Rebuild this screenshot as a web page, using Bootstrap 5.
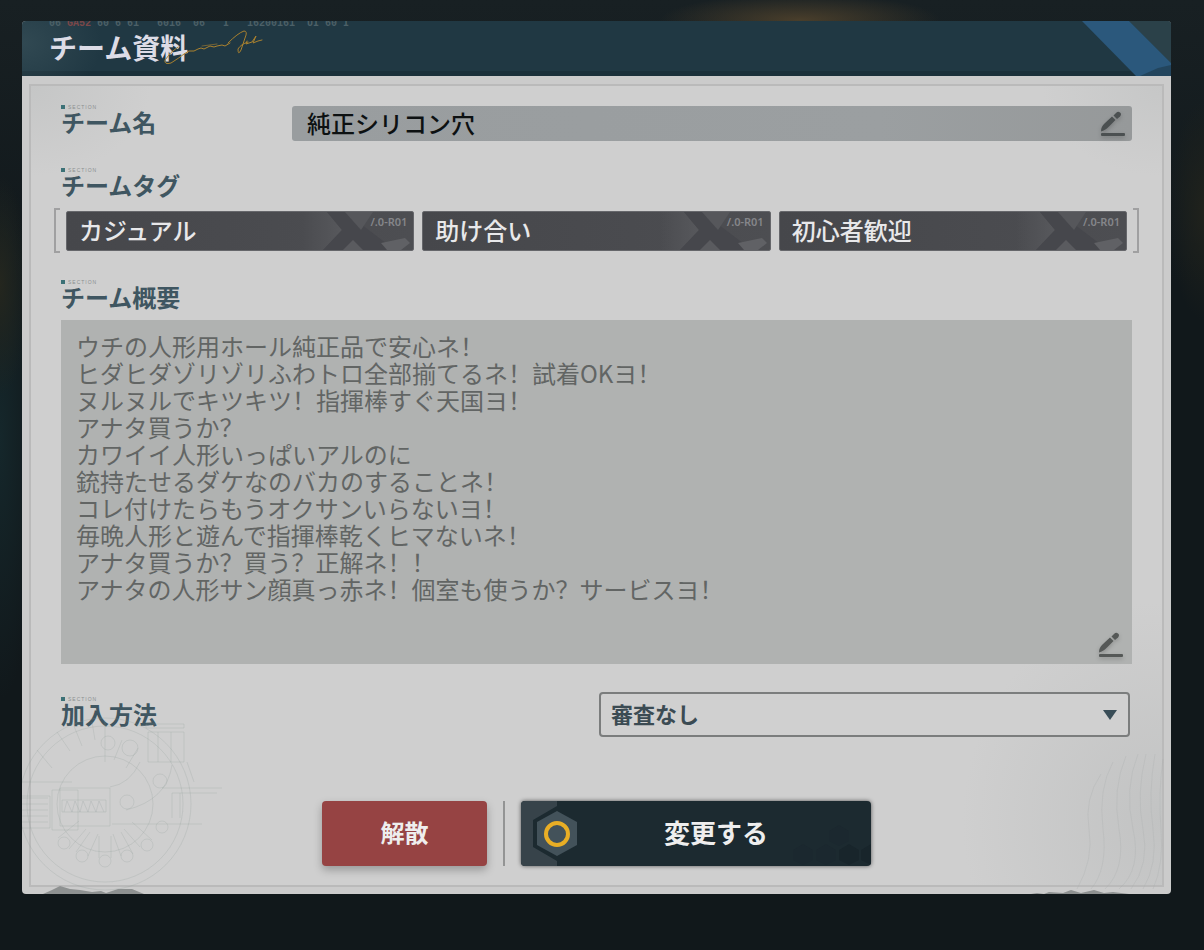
<!DOCTYPE html>
<html lang="ja">
<head>
<meta charset="utf-8">
<meta name="viewport" content="width=device-width, initial-scale=1">
<title>チーム資料</title>
<link href="https://cdn.jsdelivr.net/npm/bootstrap@5.3.0/dist/css/bootstrap.min.css" rel="stylesheet">
<script src="https://cdn.jsdelivr.net/npm/bootstrap@5.3.0/dist/js/bootstrap.bundle.min.js"></script>
<style>
  :root { --ink: #3f5661; --paper: #cfcfcf; }
  body {
    min-height: 100vh;
    padding: 21px 33px 48px 22px;
    font-family: "Noto Sans CJK JP", "Noto Sans", sans-serif;
    background:
      radial-gradient(ellipse 140px 26px at 800px 20px, #493e2b, transparent),
      radial-gradient(ellipse 30px 110px at 0 285px, #24261e 0, transparent 100%),
      radial-gradient(ellipse 36px 110px at 100% 210px, #20221c 0, transparent 100%),
      radial-gradient(ellipse 40px 260px at 0 440px, #15272b 0, transparent 100%),
      linear-gradient(#182023, #11181b 30%, #11181b);
  }
  .sheet { background: #cbcbcb; border-radius: 4px; overflow: hidden; isolation: isolate; }
  .sheet-head {
    height: 55px; padding-left: 27px; overflow: hidden;
    background: linear-gradient(#203843 0 50px, #1b303a 50px);
  }
  .sheet-head::before {
    content: ""; position: absolute; inset: 0;
    background: radial-gradient(ellipse 80px 60px at 0 40%, #4d656c60, transparent);
  }
  .sheet-title { font-size: 28px; line-height: 36px; font-weight: 700; color: #dcdce6; }
  .serial { top: -3px; left: 27px; font: 700 10px/12px "Liberation Mono", monospace; color: #4c6067; white-space: pre; }
  .serial span { color: #7b4748; }
  .signature { left: 140px; top: 6px; }
  .ribbon { right: 0; top: 0; }
  .sheet-body { padding: 8px 7px 7px; }
  .frame { border: 2px solid #bababa; padding: 18px 30px 19px;
    background:
      radial-gradient(ellipse 200px 220px at 100% 92%, #c2c3c3, transparent),
      radial-gradient(ellipse 120px 90px at 0 0, #c5c6c6, transparent),
      radial-gradient(ellipse 120px 90px at 100% 0, #c6c7c7, transparent),
      var(--paper); }
  .art-left { left: 0; bottom: 0; }
  .art-left g { stroke-opacity: .22; }
  .art-right { right: 0; bottom: 0; }
  .section-name { font-size: 24px; line-height: 24px; font-weight: 700; color: var(--ink); }
  .section-tick { display: flex; align-items: center; gap: 3px; height: 6px; font: 5px/6px "Liberation Sans", sans-serif; letter-spacing: 1px; color: #8b9090; }
  .section-tick::before { content: ""; width: 4px; height: 4px; background: #3c7176; }
  .name-col { width: 231px; }
  .name-field { height: 35px; margin-top: 2px; border-radius: 3px; background: linear-gradient(90deg, #999d9f, #9b9fa1 70%, #96999a); }
  .name-field input { font-size: 24px; line-height: 32px; font-weight: 500; color: #0d1112; padding: 0 15px 2px; }
  .name-field input:focus, .about:focus { box-shadow: none; background: transparent; }
  .edit { width: 38px; height: 35px; line-height: 0; }
  .edit svg { filter: drop-shadow(0 2px 2px #0003); }
  .row-tags { margin-top: 26px; }
  .tag-rail { margin: 11px -7px 0 -7px; }
  .tag-list { gap: 8px; margin: 0 6px; }
  .bracket { width: 6px; height: 45px; border: 2px solid #a0a0a1; }
  .bracket-l { border-right: 0; }
  .bracket-r { border-left: 0; }
  .tag { height: 40px; border-radius: 2px; overflow: hidden; font-size: 24px; line-height: 36px; font-weight: 500; color: #e8e8ea;
    padding-left: 12px; background: linear-gradient(90deg, #46474b, #4a4b4f 60%, #4d4e52); border: 1px solid #66676b; }
  .tag svg { right: 0; top: 0; }
  .tag-code { right: 6px; top: 3px; font: 600 11px/14px "Noto Sans", sans-serif; color: #85868a; }
  .tag-text { position: relative; }
  .row-about { margin-top: 26px; }
  .about-box { margin-top: 11px; background: #b0b2b1; }
  .about { display: block; height: 344px; resize: none; overflow: hidden; font-family: "Noto Sans CJK SC", sans-serif; font-size: 24px; line-height: 27px;
    color: #626564; padding: 12px 15px; }
  .about-box .edit { right: 2px; bottom: 2px; }
  .row-join { margin-top: 28px; }
  .join-select { width: 50%; max-width: 531px; height: 45px; padding: 0 40px 2px 10px; margin-right: 2px; font-size: 22px; font-weight: 700; color: #3b4b53;
    border: 2px solid #7b7d7d; border-radius: 4px; background-color: #d0d0d0;
    background-image: url("data:image/svg+xml,%3Csvg xmlns='http://www.w3.org/2000/svg' viewBox='0 0 14 10'%3E%3Cpath d='M0 0h14L7 10z' fill='%23394d57'/%3E%3C/svg%3E");
    background-size: 14px 10px; background-position: right 11px center; }
  .actions { margin-top: 64px; gap: 16px; }
  .act { height: 65px; border-radius: 4px; font-weight: 700; color: #eee; padding: 0 0 4px; }
  .act:hover { color: #fff; }
  .act-break { width: 165px; font-size: 24px; background: #964343; box-shadow: 0 4px 8px #0004; }
  .act-save { width: 350px; font-size: 26px; background: #1c2a30; box-shadow: 0 0 4px #0009; overflow: hidden; padding-left: 40px; }
  .act-save svg { left: 0; top: 0; }
  .act-save .comb { left: auto; right: 0; }
  .rule { width: 2px; background: #939494; }
</style>
</head>
<body>
<svg width="0" height="0" class="position-absolute" aria-hidden="true">
  <defs>
    <symbol id="pencil" viewBox="0 0 26 26">
      <path d="M1 20.500C1 17 2 14.500 5 12L12 5.500 15.500 9 9 15.500C6 18.500 4 19.500 1 20.500Z"/>
      <path d="M13.500 4.500 16 2Q18 0 20 1.500T20 5.500L17 8Z"/>
      <rect x="1" y="22" width="24" height="3" rx="1"/>
    </symbol>
    <linearGradient id="fade"><stop offset="0" stop-color="#57585c" stop-opacity="0"/><stop offset="1" stop-color="#57585c"/></linearGradient>
    <symbol id="camo" viewBox="0 0 110 38">
      <path d="M0 0H24L39 18 20 38H0Z" fill="url(#fade)"/>
      <path d="M24 0H42L92 38H59L50 28 40 38H20L39 18Z" fill="#46474c"/>
      <path d="M42 0H70L58 18Z" fill="#56575b"/>
      <path d="M40 38 50 28 60 38Z" fill="#5a5b5f"/>
      <path d="M78 31 102 26 107 31 98 38H84Z" fill="#606165"/>
    </symbol>
  </defs>
</svg>

<main class="sheet position-relative">
  <header class="sheet-head position-relative">
    <div class="serial position-absolute" aria-hidden="true">06 <span>GA52</span> 60 6 61   6016  06   I   16200161  UI 60 I</div>
    <h1 class="sheet-title position-relative mb-0 pt-2">チーム資料</h1>
    <svg class="signature position-absolute" width="105" height="42" viewBox="0 0 105 42" fill="none" stroke="#a9812f" stroke-linecap="round" stroke-linejoin="round" aria-hidden="true">
      <path d="M16 20Q8 25 3 33Q2 38 9 36Q17 31 22 27L27 24 32 24 36 22 39 21 42 22 48 19 52 20 55 19 60 18 63 19 68 16"/>
      <path d="M66 16Q76 6 82 4Q86 4 83 11L79 23Q76 29 76 22Q79 17 86 15M85 14 84 17 90 15 94 9 91 16 96 14 100 13"/>
      <path d="M40 19 55 17" stroke-opacity=".6"/>
    </svg>
    <svg class="ribbon position-absolute" width="89" height="55" viewBox="0 0 89 55" aria-hidden="true">
      <path d="M47 0H89V42Z" fill="#2b4149"/>
      <path d="M0 0H47L89 42V55H54Z" fill="#2b587c"/>
      <path d="M89 44 76 47 58 55H89Z" fill="#23455d"/>
    </svg>
  </header>

  <div class="sheet-body">
    <form class="frame">
      <div class="d-flex align-items-start">
        <label class="name-col flex-shrink-0" for="teamName">
          <span class="section-tick" aria-hidden="true">SECTION</span>
          <span class="section-name d-block">チーム名</span>
        </label>
        <div class="name-field d-flex flex-grow-1">
          <input class="form-control border-0 bg-transparent rounded-0" id="teamName" type="text" value="純正シリコン穴">
          <button class="edit btn p-0 border-0 flex-shrink-0" type="button" aria-label="チーム名を編集">
            <svg width="26" height="26" fill="#4b5051"><use href="#pencil"/></svg>
          </button>
        </div>
      </div>

      <section class="row-tags" aria-labelledby="tagHead">
        <span class="section-tick" aria-hidden="true">SECTION</span>
        <h2 class="section-name mb-0" id="tagHead">チームタグ</h2>
        <div class="tag-rail d-flex align-items-center">
          <span class="bracket bracket-l flex-shrink-0"></span>
          <div class="tag-list d-flex flex-grow-1">
            <div class="tag position-relative w-100"><svg class="position-absolute" width="110" height="38" aria-hidden="true"><use href="#camo"/></svg><span class="tag-text">カジュアル</span><span class="tag-code position-absolute">/.0-R01</span></div>
            <div class="tag position-relative w-100"><svg class="position-absolute" width="110" height="38" aria-hidden="true"><use href="#camo"/></svg><span class="tag-text">助け合い</span><span class="tag-code position-absolute">/.0-R01</span></div>
            <div class="tag position-relative w-100"><svg class="position-absolute" width="110" height="38" aria-hidden="true"><use href="#camo"/></svg><span class="tag-text">初心者歓迎</span><span class="tag-code position-absolute">/.0-R01</span></div>
          </div>
          <span class="bracket bracket-r flex-shrink-0"></span>
        </div>
      </section>

      <section class="row-about">
        <label class="d-block" for="about">
          <span class="section-tick" aria-hidden="true">SECTION</span>
          <span class="section-name d-block">チーム概要</span>
        </label>
        <div class="about-box position-relative">
          <textarea class="about form-control border-0 rounded-0 bg-transparent" id="about" lang="zh-Hans">ウチの人形用ホール純正品で安心ネ！
ヒダヒダゾリゾリふわトロ全部揃てるネ！試着OKヨ！
ヌルヌルでキツキツ！指揮棒すぐ天国ヨ！
アナタ買うか？
カワイイ人形いっぱいアルのに
銃持たせるダケなのバカのすることネ！
コレ付けたらもうオクサンいらないヨ！
毎晩人形と遊んで指揮棒乾くヒマないネ！
アナタ買うか？買う？正解ネ！！
アナタの人形サン顔真っ赤ネ！個室も使うか？サービスヨ！</textarea>
          <button class="edit btn p-0 border-0 position-absolute" type="button" aria-label="チーム概要を編集">
            <svg width="26" height="26" fill="#555857"><use href="#pencil"/></svg>
          </button>
        </div>
      </section>

      <div class="row-join d-flex justify-content-between align-items-start">
        <label for="join" class="pt-1">
          <span class="section-tick" aria-hidden="true">SECTION</span>
          <span class="section-name d-block">加入方法</span>
        </label>
        <select class="join-select form-select" id="join"><option>審査なし</option></select>
      </div>

      <div class="actions d-flex justify-content-center">
        <button class="act act-break btn border-0" type="button">解散</button>
        <span class="rule"></span>
        <button class="act act-save btn border-0 position-relative" type="submit">
          <svg class="position-absolute" width="60" height="65" viewBox="0 0 60 65" aria-hidden="true">
            <path d="M0 0H36V5L12 19V46L36 60V65H0Z" fill="#37434a"/>
            <path d="M36 10 56 21V44L36 55 16 44V21Z" fill="#43525a"/>
            <circle cx="36" cy="33" r="11" fill="none" stroke="#e9ae25" stroke-width="4"/>
          </svg>
          <svg class="comb position-absolute" width="100" height="65" viewBox="0 0 100 65" fill="#18252b" aria-hidden="true">
            <path d="M78 43 88 49V59L78 64 68 59V49ZM100 43 90 49V59L100 64Z"/>
            <path d="M32 43 42 49V59L32 64 22 59V49ZM55 43 65 49V59L55 64 45 59V49ZM68 24 78 30V40L68 45 58 40V30Z" fill-opacity=".25"/>
          </svg>
          変更する
        </button>
      </div>
    </form>

    <svg class="art-left position-absolute pe-none" width="220" height="180" viewBox="0 0 220 180" fill="none" stroke="#8f9b98" aria-hidden="true">
      <g transform="translate(0 -24)">
        <circle cx="83" cy="114" r="86"/><circle cx="83" cy="114" r="78"/><circle cx="83" cy="114" r="48"/>
        <path d="M0 92H50M0 106H28V138H0M30 100H56V140H30ZM38 98H88V136H38ZM40 110H84V122H40ZM42 122l3-11 5 11 3-11 5 11 3-11 5 11 3-11 5 11 3-11 5 11M126 42H162V72H126ZM124 34H162V38H124ZM136 42V72M149 42V72M165 72 172 92M118 72Q108 94 88 97M150 75Q145 110 104 120M100 50 92 70M116 58 104 78"/>
        <path d="M140 98H200M150 103H195M150 103V128M158 103V128M90 134H180M0 108H26M0 114H26M0 120H26M0 126H26M0 132H26M83 30V72M15 60 30 78M35 42 48 61M52 36 60 56M70 32 73 50"/>
        <circle cx="108" cy="58" r="8"/><circle cx="86" cy="53" r="7"/><circle cx="138" cy="91" r="7"/><circle cx="105" cy="112" r="7"/>
        <circle cx="42" cy="153" r="6"/><circle cx="60" cy="166" r="6"/><circle cx="83" cy="171" r="6"/><circle cx="105" cy="166" r="6"/><circle cx="125" cy="155" r="6"/><circle cx="140" cy="137" r="6"/>
        <path d="M36 148 57 131M47 159 64 139M54 162 68 142M66 166 76 144M77 168V146M89 168V146M99 166 91 144M111 164 99 142M118 157 102 139M130 150 110 132"/>
      </g>
      <path d="M21 180 30 176 38 172 48 175 58 176 70 178 79 177 84 179 96 175 110 175 122 180Z" fill="#8e9191" stroke="none"/>
    </svg>
    <svg class="art-right position-absolute pe-none" width="150" height="150" viewBox="0 30 150 150" fill="none" stroke="#a9abab" stroke-opacity=".28" aria-hidden="true">
      <path d="M142 45Q137 80 140 115T132 175M134 40Q127 80 132 115T122 175M125 40Q115 80 122 115T110 175M117 40Q103 75 112 115T98 175M105 42Q91 75 98 115T84 175M92 48Q77 75 82 115T70 175M80 60Q63 85 68 115T56 175"/>
      <path d="M10 180 16 179 23 180 28 178 42 179 50 176 60 179 73 176 83 179 92 178 108 180Z" fill="#8e9191" stroke="none"/>
    </svg>
  </div>
</main>
</body>
</html>
